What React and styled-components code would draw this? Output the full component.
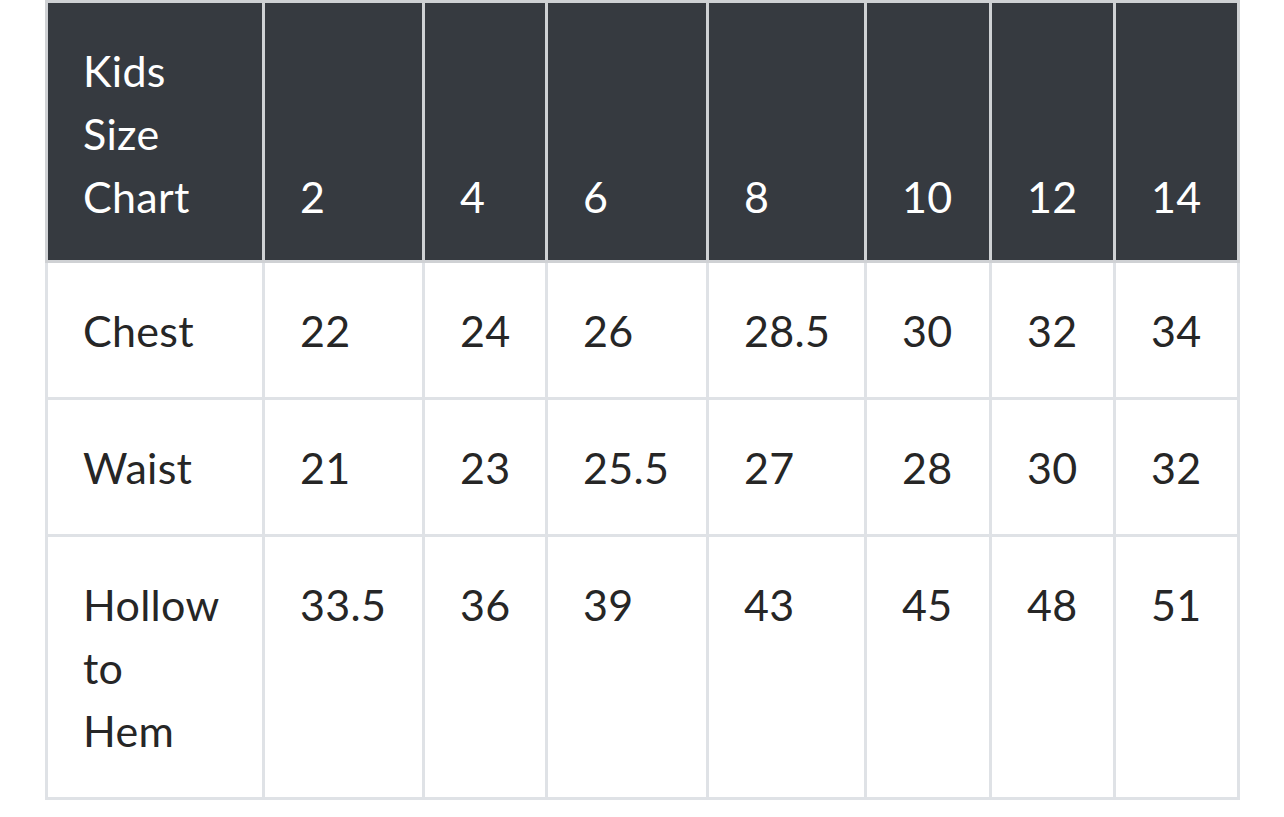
import React from "react";
import styled, { createGlobalStyle } from "styled-components";

const GlobalStyle = createGlobalStyle`
  html, body {
    margin: 0;
    padding: 0;
    background: #ffffff;
  }
  body {
    font-family: Lato, "Noto Sans", sans-serif;
  }
`;

const Page = styled.div`
  width: 1284px;
  height: 817px;
  overflow: hidden;
  padding-left: 45px;
  box-sizing: border-box;
`;

const Table = styled.table`
  border-collapse: collapse;
  table-layout: fixed;
  width: 1195px;
  font-size: 43px;
  line-height: 63px;
  letter-spacing: 0.3px;
`;

const HeadCell = styled.th`
  background: #363a40;
  color: #ffffff;
  font-weight: 400;
  text-align: left;
  vertical-align: bottom;
  padding: 36px 35px 32px;
  border: 3px solid #cfd1d4;
`;

const Cell = styled.td`
  color: #262626;
  text-align: left;
  vertical-align: top;
  padding: 36px 35px 35px;
  border: 3px solid #dfe2e6;
`;

const widths = [217, 160, 123, 161, 158, 125, 124, 124];
const sizes = ["2", "4", "6", "8", "10", "12", "14"];

const rows = [
  { label: "Chest", values: ["22", "24", "26", "28.5", "30", "32", "34"] },
  { label: "Waist", values: ["21", "23", "25.5", "27", "28", "30", "32"] },
  {
    label: (
      <>
        Hollow
        <br />
        to
        <br />
        Hem
      </>
    ),
    values: ["33.5", "36", "39", "43", "45", "48", "51"],
  },
];

export default function App() {
  return (
    <Page>
      <GlobalStyle />
      <Table>
        <colgroup>
          {widths.map((w, i) => (
            <col key={i} style={{ width: w }} />
          ))}
        </colgroup>
        <thead>
          <tr>
            <HeadCell>
              Kids
              <br />
              Size
              <br />
              Chart
            </HeadCell>
            {sizes.map((s) => (
              <HeadCell key={s}>{s}</HeadCell>
            ))}
          </tr>
        </thead>
        <tbody>
          {rows.map((row, i) => (
            <tr key={i}>
              <Cell>{row.label}</Cell>
              {row.values.map((v, j) => (
                <Cell key={j}>{v}</Cell>
              ))}
            </tr>
          ))}
        </tbody>
      </Table>
    </Page>
  );
}
